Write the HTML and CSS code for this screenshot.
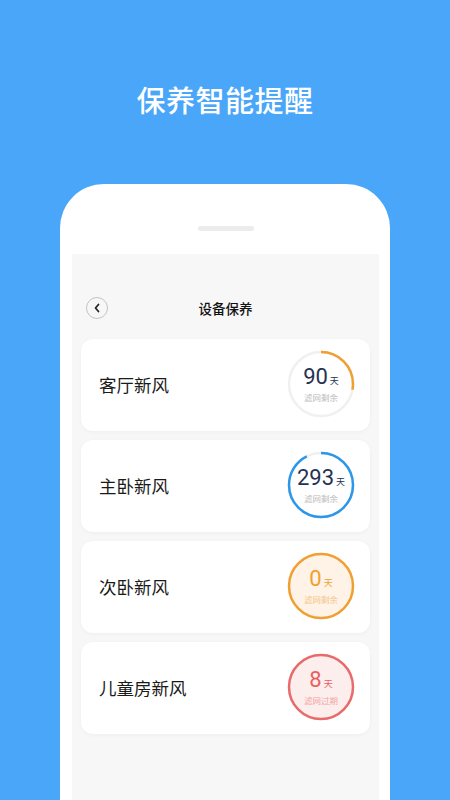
FILE: index.html
```html
<!DOCTYPE html>
<html lang="zh-CN">
<head>
    <meta charset="UTF-8">
    <title>保养智能提醒</title>
    <link rel="stylesheet" href="styles.css">
</head>
<body>
    <h1 class="headline">保养智能提醒</h1>
    <div class="phone">
        <div class="speaker"></div>
        <div class="screen">
            <div class="topbar">
                <span class="back">
                    <svg width="8" height="10" viewBox="0 0 8 10"><path d="M5.5 1.5 L2.5 5 L5.5 8.5" fill="none" stroke="#222" stroke-width="1.7" stroke-linecap="round" stroke-linejoin="round"/></svg>
                </span>
                <span class="title">设备保养</span>
            </div>
            <div class="list">
                <div class="card">
                    <span class="name">客厅新风</span>
                    <div class="ring">
                        <svg width="68" height="68" viewBox="0 0 68 68">
                            <circle cx="34" cy="34" r="32" fill="none" stroke="#f0f0f0" stroke-width="2.5"/>
                            <circle cx="34" cy="34" r="32" fill="none" stroke="#f0a032" stroke-width="2.5" stroke-dasharray="56 201" transform="rotate(-90 34 34)"/>
                        </svg>
                        <div class="value"><b>90</b><i>天</i></div>
                        <div class="sub">滤网剩余</div>
                    </div>
                </div>
                <div class="card">
                    <span class="name">主卧新风</span>
                    <div class="ring">
                        <svg width="68" height="68" viewBox="0 0 68 68">
                            <circle cx="34" cy="34" r="32" fill="none" stroke="#f0f0f0" stroke-width="2.5"/>
                            <circle cx="34" cy="34" r="32" fill="none" stroke="#2c96e8" stroke-width="2.5" stroke-dasharray="186 201" transform="rotate(-90 34 34)"/>
                        </svg>
                        <div class="value"><b>293</b><i>天</i></div>
                        <div class="sub">滤网剩余</div>
                    </div>
                </div>
                <div class="card">
                    <span class="name">次卧新风</span>
                    <div class="ring warn">
                        <svg width="68" height="68" viewBox="0 0 68 68">
                            <circle cx="34" cy="34" r="32" fill="#fef3e6" stroke="#f0a032" stroke-width="2.5"/>
                        </svg>
                        <div class="value"><b>0</b><i>天</i></div>
                        <div class="sub">滤网剩余</div>
                    </div>
                </div>
                <div class="card">
                    <span class="name">儿童房新风</span>
                    <div class="ring over">
                        <svg width="68" height="68" viewBox="0 0 68 68">
                            <circle cx="34" cy="34" r="32" fill="#fdeeee" stroke="#e86a6a" stroke-width="2.5"/>
                        </svg>
                        <div class="value"><b>8</b><i>天</i></div>
                        <div class="sub">滤网过期</div>
                    </div>
                </div>
            </div>
        </div>
    </div>
</body>
</html>
```

FILE: styles.css
```css
* {
    margin: 0;
    box-sizing: border-box;
    font-family: "Noto Sans CJK SC", "Noto Sans", sans-serif;
}
body {
    height: 800px;
    overflow: hidden;
    background: #4aa6f9;
    display: flex;
    flex-direction: column;
    align-items: center;
}

.headline {
    margin-top: 78px;
    height: 42px;
    line-height: 42px;
    color: #fff;
    font-size: 29px;
    font-weight: 500;
    letter-spacing: 0.5px;
}

.phone {
    margin-top: 64px;
    width: 330px;
    flex: 1;
    background: #fff;
    border-radius: 44px 44px 0 0;
    padding: 42px 11px 0 12px;
    display: flex;
    flex-direction: column;
}
.speaker {
    align-self: center;
    width: 56px;
    height: 5px;
    border-radius: 3px;
    background: #ececec;
}
.screen {
    margin-top: 23px;
    flex: 1;
    background: #f7f7f7;
    padding: 43px 9px 0 9px;
}

.topbar {
    height: 22px;
    display: flex;
    align-items: center;
    justify-content: center;
    position: relative;
}
.back {
    position: absolute;
    left: 5px;
    top: 0;
    width: 22px;
    height: 22px;
    border: 1px solid #c4c4c4;
    border-radius: 50%;
    display: flex;
    align-items: center;
    justify-content: center;
}
.title {
    font-size: 13.5px;
    font-weight: 500;
    color: #111;
}

.list {
    margin-top: 20px;
    display: flex;
    flex-direction: column;
    gap: 9px;
}
.card {
    height: 92px;
    background: #fff;
    border-radius: 12px;
    box-shadow: 0 1px 4px rgba(0,0,0,0.04);
    display: flex;
    align-items: center;
    justify-content: space-between;
    padding: 0 15px 2px 18px;
}
.name {
    font-size: 17.5px;
    color: #1a1a1a;
}

.ring {
    position: relative;
    width: 68px;
    height: 68px;
    display: flex;
    flex-direction: column;
    align-items: center;
    justify-content: center;
}
.ring svg {
    position: absolute;
    left: 0;
    top: 0;
}
.value {
    position: relative;
    display: flex;
    align-items: baseline;
    margin-top: 0;
    color: #253252;
}
.value b {
    font-family: Roboto, "Noto Sans", sans-serif;
    font-weight: 400;
    font-size: 22px;
    line-height: 24px;
}
.value i {
    font-style: normal;
    font-size: 9px;
    margin-left: 2px;
}
.sub {
    position: relative;
    margin-top: 3px;
    font-size: 8.5px;
    line-height: 11px;
    color: #bbbbbb;
}
.warn .value {
    color: #f0a032;
}
.warn .sub {
    color: #f5c48a;
}
.over .value {
    color: #e86060;
}
.over .sub {
    color: #f0a4a4;
}
```
